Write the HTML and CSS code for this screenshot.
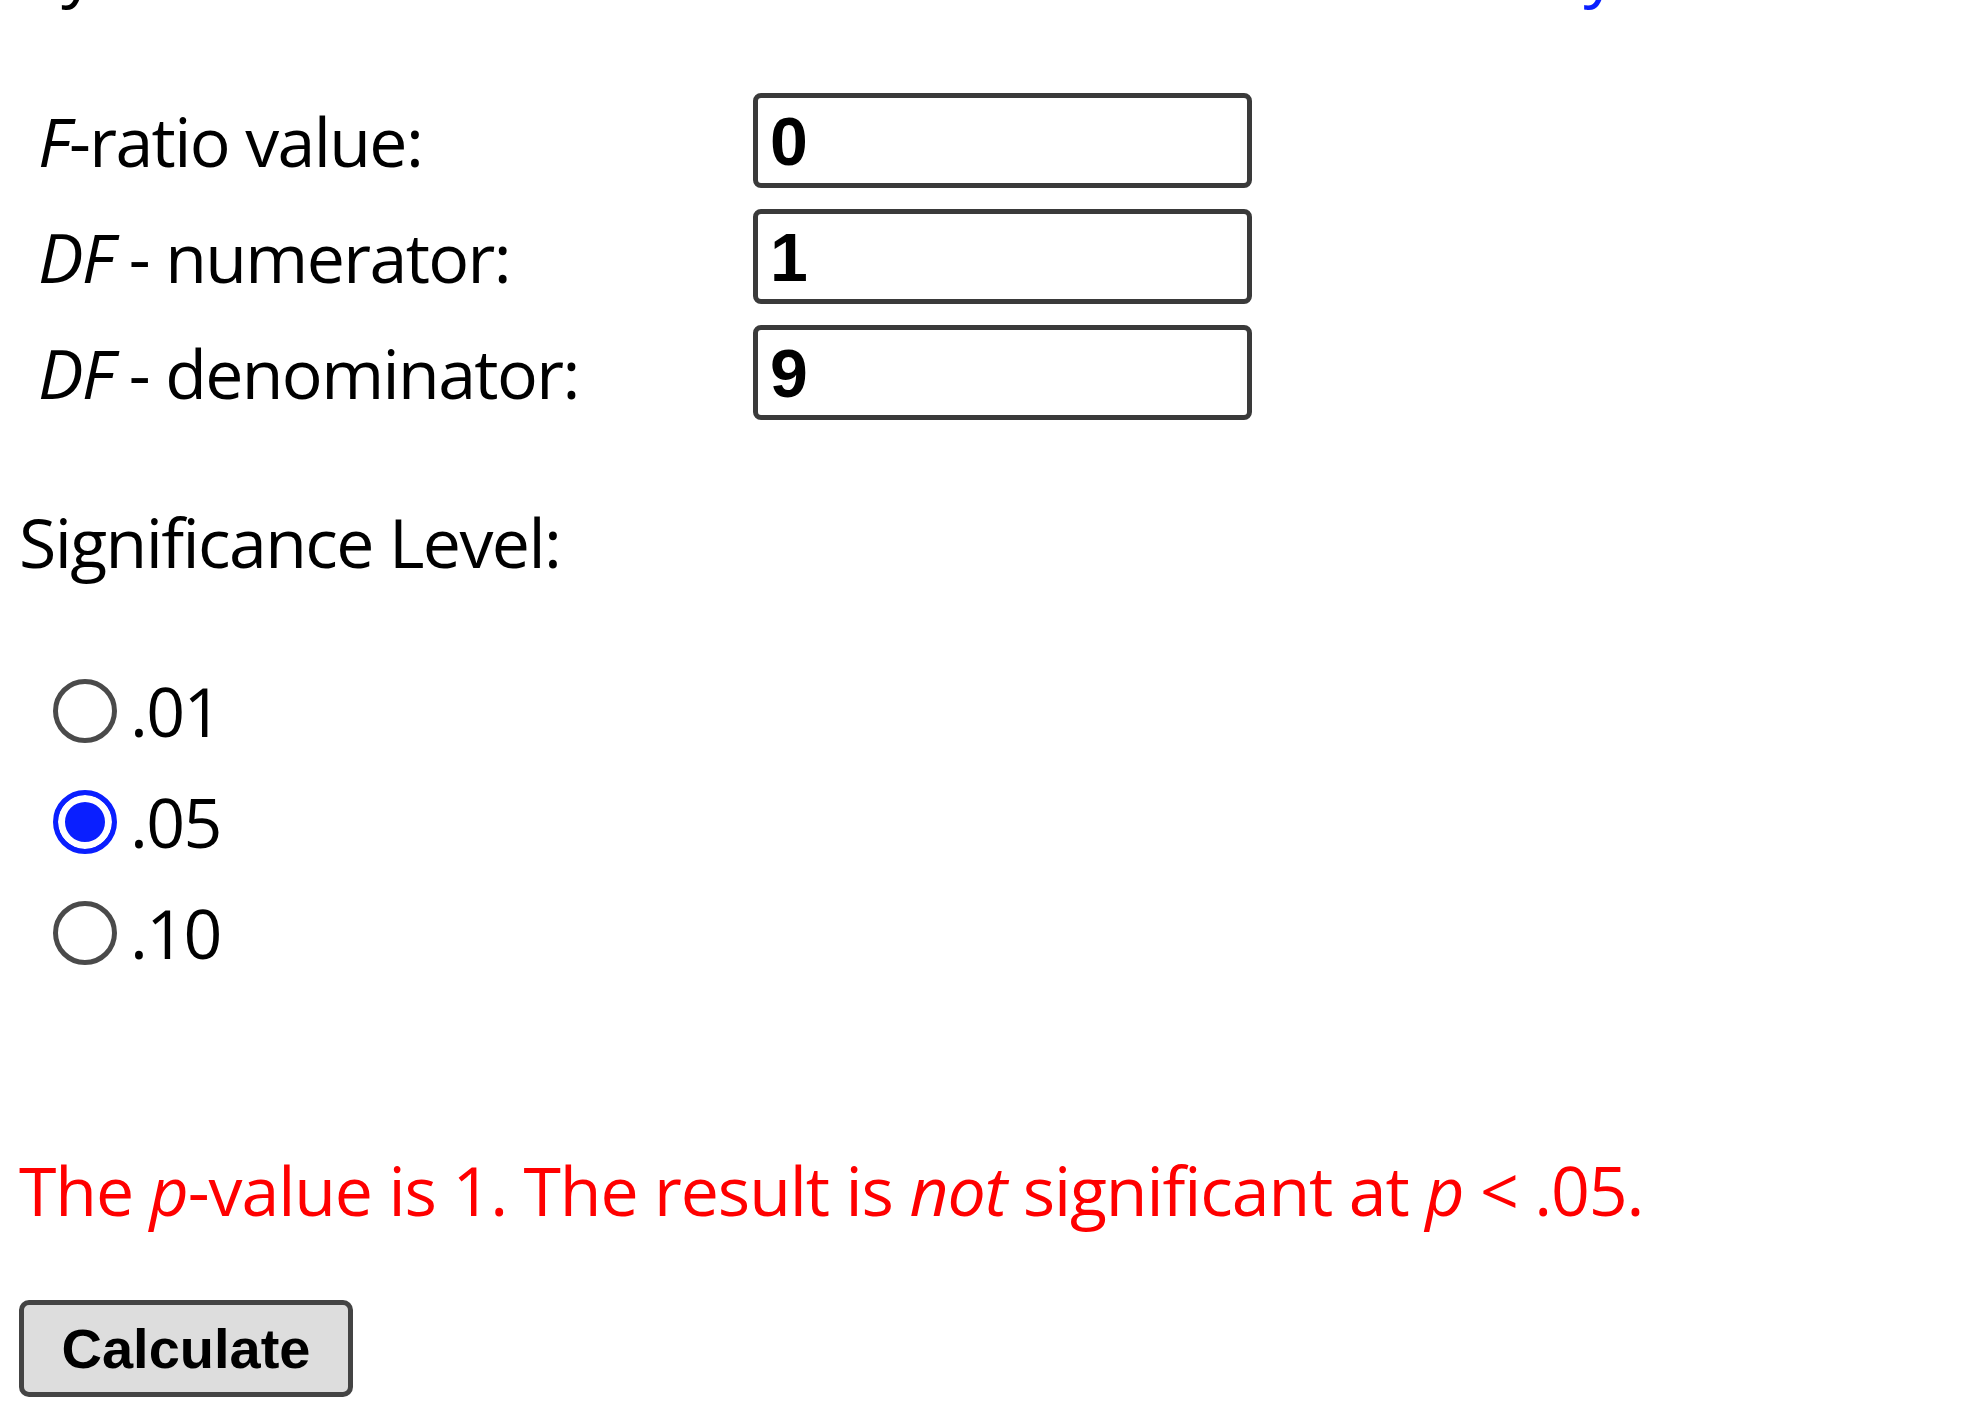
FILE: index.html
```html
<!DOCTYPE html>
<html lang="en">
<head>
  <meta charset="UTF-8" />
  <title>F-Ratio p-Value Calculator</title>
  <link rel="stylesheet" href="styles.css">
</head>
<body>

  <p class="intro">By the values below <a href="#" class="intro-link">see the F-test summary</a></p>

  <div class="fields">
    <label class="field-label" for="fratio"><i>F</i>-ratio value:</label>
    <input class="field-input" type="text" id="fratio" value="0" />

    <label class="field-label" for="dfnum"><i>DF</i> - numerator:</label>
    <input class="field-input" type="text" id="dfnum" value="1" />

    <label class="field-label" for="dfden"><i>DF</i> - denominator:</label>
    <input class="field-input" type="text" id="dfden" value="9" />
  </div>

  <p class="sig-title">Significance Level:</p>

  <div class="levels">
    <label class="level"><input type="radio" name="sig" value="0.01" />.01</label>
    <label class="level"><input type="radio" name="sig" value="0.05" checked />.05</label>
    <label class="level"><input type="radio" name="sig" value="0.10" />.10</label>
  </div>

  <p class="result">The <i>p</i>-value is 1. The result is <i>not</i> significant at <i>p</i> &lt; .05.</p>

  <button class="calc-btn" type="button">Calculate</button>

</body>
</html>
```

FILE: styles.css
```css
body {
  font-family: "Open Sans", "Noto Sans", sans-serif;
  font-size: 68px;
  font-weight: 500;
  letter-spacing: -1.6px;
  color: #000;
  background-color: #fff;
  margin: 0;
  padding: 0 19px;
  overflow: hidden;
}

.intro {
  margin: -72px 0 0 0;
  line-height: 80px;
  white-space: nowrap;
}

.intro-link {
  color: #0a1fff;
  text-decoration: none;
  margin-left: 278px;
}

.fields {
  display: grid;
  grid-template-columns: 715px 499px;
  row-gap: 21px;
  align-items: center;
  margin-top: 85px;
  padding-left: 19px;
}

.field-label {
  line-height: 80px;
  white-space: nowrap;
}

.field-input {
  box-sizing: border-box;
  width: 499px;
  height: 95px;
  border: 5px solid #3a3a3a;
  border-radius: 8px;
  padding: 0 12px;
  font-family: "Liberation Sans", Arial, sans-serif;
  font-size: 68px;
  font-weight: bold;
  letter-spacing: 0;
  color: #000;
  outline: none;
}

.sig-title {
  margin: 82px 0 0 0;
  line-height: 80px;
}

.levels {
  margin-top: 73px;
}

.level {
  display: flex;
  align-items: center;
  height: 111px;
  line-height: 111px;
}

.level input {
  appearance: none;
  -webkit-appearance: none;
  box-sizing: border-box;
  width: 64px;
  height: 64px;
  margin: 0 13px 0 34px;
  border: 5px solid #4a4a4a;
  border-radius: 50%;
  background-color: #fff;
}

.level input:checked {
  border-color: #0a1fff;
  background-color: #0a1fff;
  box-shadow: inset 0 0 0 7px #fff;
}

.result {
  margin: 162px 0 0 0;
  line-height: 80px;
  color: #ff0000;
  letter-spacing: -1.1px;
  white-space: nowrap;
}

.calc-btn {
  display: block;
  box-sizing: border-box;
  width: 334px;
  height: 97px;
  margin-top: 70px;
  border: 5px solid #444;
  border-radius: 10px;
  background-color: #dddddd;
  font-family: "Liberation Sans", Arial, sans-serif;
  font-weight: bold;
  font-size: 56px;
  letter-spacing: 0;
  color: #000;
  padding: 0;
}
```
